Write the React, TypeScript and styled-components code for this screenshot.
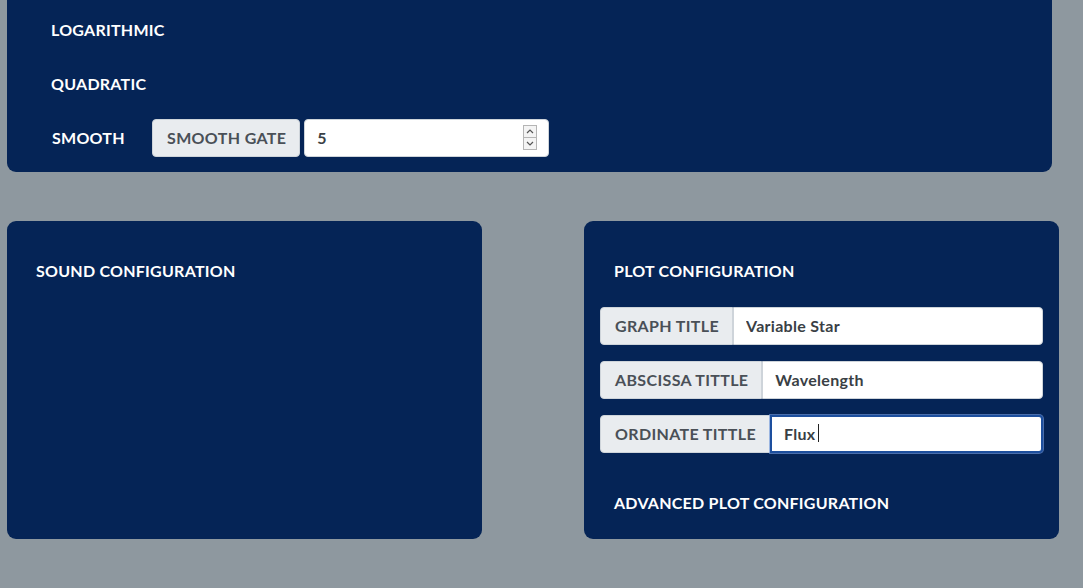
import React from 'react';
import styled, { createGlobalStyle } from 'styled-components';

const COLORS = {
  page: '#8e989f',
  panel: '#052456',
  white: '#ffffff',
  addon: '#e9ecef',
  addonText: '#4a5057',
  border: '#ced4da',
  inputText: '#3a3f45',
  focus: '#1d4f9e',
};

const FONT = "Lato, 'Noto Sans', sans-serif";

const GlobalStyle = createGlobalStyle`
  html, body {
    margin: 0;
    padding: 0;
    background: ${COLORS.page};
    font-family: ${FONT};
  }
`;

const Page = styled.div`
  width: 1083px;
  height: 588px;
  overflow: hidden;
  padding: 0 7px;
  box-sizing: border-box;
`;

const TopPanel = styled.section`
  width: 1045px;
  background: ${COLORS.panel};
  border-radius: 0 0 9px 9px;
  padding: 11px 44px 15px;
  box-sizing: border-box;
  display: flex;
  flex-direction: column;
  gap: 16px;
`;

const OptionRow = styled.div`
  display: flex;
  align-items: center;
  height: 38px;
`;

const OptionLabel = styled.span<{ width?: number }>`
  color: ${COLORS.white};
  font-weight: 700;
  font-size: 16px;
  letter-spacing: 0.25px;
  margin-top: -2px;
  width: ${p => (p.width ? `${p.width}px` : 'auto')};
  padding-left: ${p => (p.width ? '1px' : '0')};
`;

const Columns = styled.div`
  display: grid;
  grid-template-columns: 475px 475px;
  column-gap: 102px;
  margin-top: 49px;
`;

const Card = styled.section`
  height: 318px;
  background: ${COLORS.panel};
  border-radius: 9px;
  padding: 31px 16px 0;
  box-sizing: border-box;
  display: flex;
  flex-direction: column;
`;

const CardTitle = styled.h2<{ inset?: number }>`
  margin: 0;
  height: 38px;
  line-height: 37px;
  color: ${COLORS.white};
  font-weight: 700;
  font-size: 16px;
  letter-spacing: 0.25px;
  padding-left: ${p => p.inset ?? 14}px;
`;

const Fields = styled.div`
  display: flex;
  flex-direction: column;
  gap: 16px;
  margin: 17px 0 31px;
`;

const InputGroup = styled.div<{ gap?: number; width?: string }>`
  display: flex;
  height: 38px;
  gap: ${p => p.gap ?? 0}px;
  width: ${p => p.width ?? '100%'};
`;

const Addon = styled.span<{ joined?: boolean }>`
  display: flex;
  align-items: center;
  padding: 0 13px 1px 14px;
  background: ${COLORS.addon};
  border: 1px solid ${COLORS.border};
  border-radius: ${p => (p.joined ? '4px 0 0 4px' : '4px')};
  color: ${COLORS.addonText};
  font-weight: 700;
  font-size: 16px;
  letter-spacing: 0.35px;
  white-space: nowrap;
`;

const InputWrap = styled.div`
  position: relative;
  flex: 1;
  display: flex;
`;

const TextInput = styled.input<{ joined?: boolean; focused?: boolean }>`
  flex: 1;
  min-width: 0;
  box-sizing: border-box;
  height: 38px;
  padding: 0 12px 1px;
  border: ${p => (p.focused ? `2px solid ${COLORS.focus}` : `1px solid ${COLORS.border}`)};
  border-radius: ${p => (p.joined ? '0 4px 4px 0' : '4px')};
  box-shadow: ${p => (p.focused ? '0 0 0 1px rgba(120, 160, 230, 0.6)' : 'none')};
  background: ${COLORS.white};
  color: ${COLORS.inputText};
  font-family: ${FONT};
  font-weight: 700;
  font-size: 16px;
  letter-spacing: 0.3px;
  outline: none;
`;

const Spinner = styled.div`
  position: absolute;
  right: 12px;
  top: 6px;
  width: 14px;
  height: 25px;
  display: flex;
  flex-direction: column;
  border: 1px solid #b5b5b5;
  box-sizing: border-box;
  background: #f4f4f4;
`;

const SpinButton = styled.div<{ down?: boolean }>`
  flex: 1;
  display: flex;
  align-items: center;
  justify-content: center;
  border-top: ${p => (p.down ? '1px solid #b5b5b5' : 'none')};
`;

const Caret = styled.span`
  position: absolute;
  left: 48px;
  top: 9px;
  width: 1px;
  height: 18px;
  background: #222;
`;

const Chevron = ({ down }: { down?: boolean }) => (
  <svg width="8" height="5" viewBox="0 0 8 5">
    <path
      d={down ? 'M1 1 L4 4 L7 1' : 'M1 4 L4 1 L7 4'}
      fill="none"
      stroke="#555"
      strokeWidth="1.2"
    />
  </svg>
);

const plotFields = [
  { label: 'GRAPH TITLE', value: 'Variable Star' },
  { label: 'ABSCISSA TITTLE', value: 'Wavelength' },
  { label: 'ORDINATE TITTLE', value: 'Flux', focused: true },
];

const App: React.FC = () => (
  <Page>
    <GlobalStyle />
    <TopPanel>
      <OptionRow>
        <OptionLabel>LOGARITHMIC</OptionLabel>
      </OptionRow>
      <OptionRow>
        <OptionLabel>QUADRATIC</OptionLabel>
      </OptionRow>
      <OptionRow>
        <OptionLabel width={100}>SMOOTH</OptionLabel>
        <InputGroup gap={4} width="397px">
          <Addon>SMOOTH GATE</Addon>
          <InputWrap>
            <TextInput defaultValue="5" readOnly />
            <Spinner>
              <SpinButton>
                <Chevron />
              </SpinButton>
              <SpinButton down>
                <Chevron down />
              </SpinButton>
            </Spinner>
          </InputWrap>
        </InputGroup>
      </OptionRow>
    </TopPanel>

    <Columns>
      <Card>
        <CardTitle inset={13}>SOUND CONFIGURATION</CardTitle>
      </Card>
      <Card>
        <CardTitle>PLOT CONFIGURATION</CardTitle>
        <Fields>
          {plotFields.map(f => (
            <InputGroup key={f.label}>
              <Addon joined>{f.label}</Addon>
              <InputWrap>
                <TextInput joined focused={f.focused} defaultValue={f.value} readOnly />
                {f.focused && <Caret />}
              </InputWrap>
            </InputGroup>
          ))}
        </Fields>
        <CardTitle>ADVANCED PLOT CONFIGURATION</CardTitle>
      </Card>
    </Columns>
  </Page>
);

export default App;
